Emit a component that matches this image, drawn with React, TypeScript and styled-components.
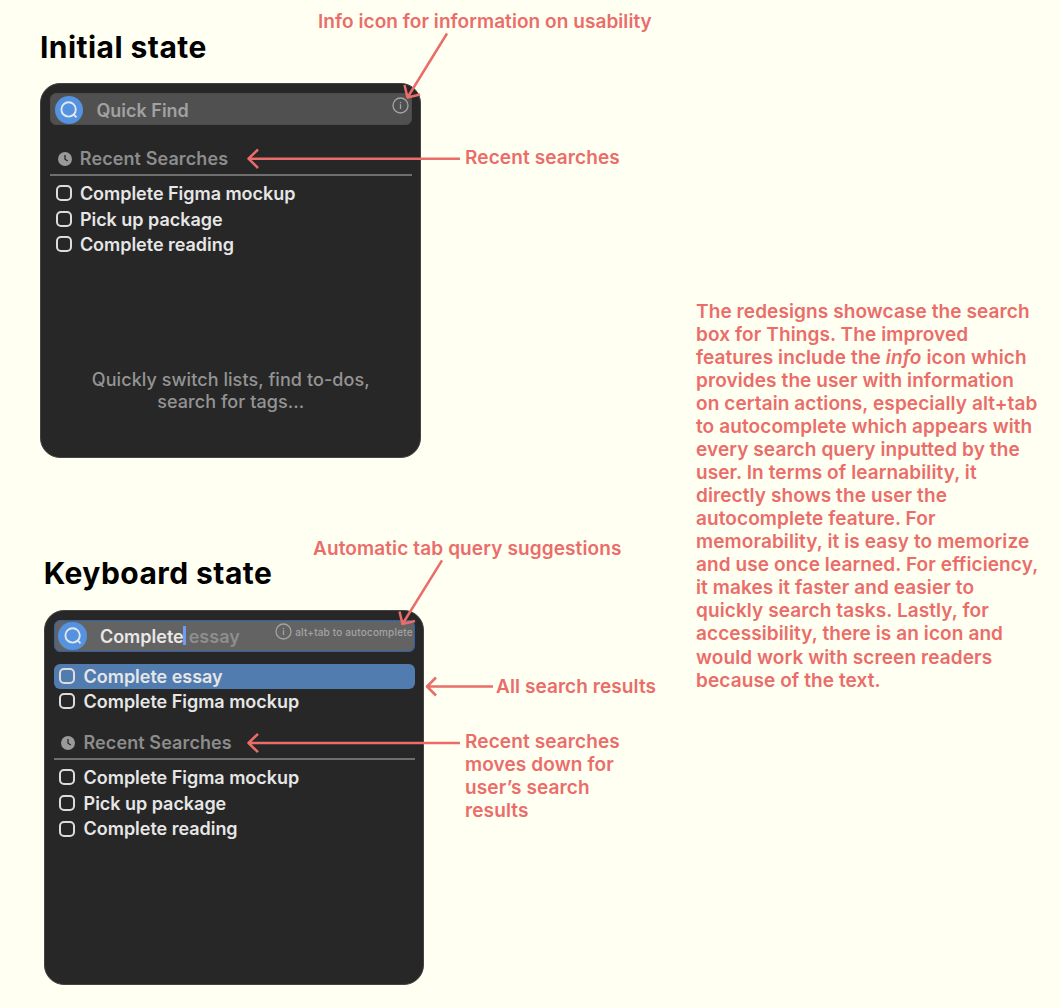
import React from "react";
import styled, { createGlobalStyle } from "styled-components";

const Global = createGlobalStyle`
  * { box-sizing: border-box; }
  body {
    margin: 0;
    background: #fffff2;
    font-family: Inter, "Liberation Sans", sans-serif;
  }
`;

const CORAL = "#ea6d6a";

const Board = styled.main`
  position: relative;
  display: flex;
  justify-content: space-between;
  width: 1060px;
  height: 1008px;
  overflow: hidden;
  background: #fffff2;
`;

const States = styled.div`
  display: flex;
  flex-direction: column;
  padding: 29px 0 0 40px;
`;

const State = styled.section<{ $shift?: boolean }>`
  display: flex;
  flex-direction: column;
  gap: 18px;
  padding-left: ${(p) => (p.$shift ? 3.7 : 0)}px;
  padding-top: ${(p) => (p.$shift ? 98 : 0)}px;
`;

const Title = styled.h1<{ $lift?: boolean }>`
  margin: ${(p) => (p.$lift ? "-1px 0 1px" : "0")};
  font-size: 30px;
  line-height: 36px;
  font-weight: 700;
  letter-spacing: 0.45px;
  color: #000;
  white-space: nowrap;
`;

const Card = styled.div`
  display: flex;
  flex-direction: column;
  width: 380.5px;
  height: 375px;
  padding: 9px 8px 0 9px;
  border: 1px solid #444444;
  border-radius: 20px;
  background: #272727;
`;

const SearchBar = styled.div<{ $active?: boolean }>`
  display: flex;
  align-items: center;
  height: 32px;
  flex: none;
  padding: ${(p) => (p.$active ? "0 0 0 3.8px" : "1.6px 0 0 4px")};
  border: ${(p) => (p.$active ? "1px solid #2c62ad" : "1px solid #4b4b4b")};
  border-radius: 6px;
  background: ${(p) => (p.$active ? "#636363" : "#505050")};
  font-size: 18px;
  line-height: 22px;
  font-weight: 600;
  color: #a1a1a1;
  white-space: pre;
`;

const SearchBadge = styled.span`
  display: flex;
  align-items: center;
  justify-content: center;
  width: 28.4px;
  height: 28.4px;
  margin-right: 13px;
  border-radius: 50%;
  background: #5592e0;
`;

const Query = styled.span`
  padding-top: 2px;
`;

const Typed = styled.span`
  padding-top: 1px;
  color: #e8e8e8;
`;

const Caret = styled.span`
  width: 3px;
  height: 19px;
  margin: -1px 0 0 -1px;
  background: #6c9df5;
`;

const Ghost = styled(Typed)`
  margin-left: 3px;
  color: #8e8e8e;
`;

const Hint = styled.span<{ $active?: boolean }>`
  display: flex;
  align-items: center;
  gap: 3px;
  margin: ${(p) => (p.$active ? "-9px 1.5px 0 auto" : "-9.4px 2px 0 auto")};
  font-size: 10px;
  line-height: 12px;
  font-weight: 500;
  letter-spacing: 0.16px;
  color: #a3a3a3;
`;

const RecentHeader = styled.div<{ $top: number }>`
  display: flex;
  align-items: center;
  flex: none;
  gap: 8.3px;
  height: 30px;
  margin-top: ${(p) => p.$top}px;
  padding: 0 0 0.6px 7.5px;
  border-bottom: 2px solid #6f6f6f;
  font-size: 18px;
  line-height: 22px;
  font-weight: 600;
  letter-spacing: 0.1px;
  color: #8c8c8c;
`;

const List = styled.ul<{ $top: number }>`
  margin: ${(p) => p.$top}px 0 0;
  padding: 0;
  list-style: none;
`;

const Row = styled.li<{ $selected?: boolean }>`
  display: flex;
  align-items: center;
  height: 25.6px;
  gap: 8.3px;
  padding-left: 5.6px;
  border-radius: 6px;
  background: ${(p) => (p.$selected ? "#507cb0" : "transparent")};
  font-size: 18px;
  line-height: 22px;
  font-weight: 600;
  letter-spacing: -0.03px;
  color: #e6e6e6;
  white-space: nowrap;
`;

const Box = styled.span`
  width: 16px;
  height: 16px;
  margin-top: -1.5px;
  border: 2px solid #dcdcdc;
  border-radius: 5px;
`;

const Empty = styled.p`
  margin: 111px 0 0;
  font-size: 18px;
  line-height: 22px;
  font-weight: 500;
  letter-spacing: 0.07px;
  text-align: center;
  color: #949494;
`;

const Rationale = styled.p`
  width: 364px;
  margin: 299.6px 0 0;
  font-size: 19px;
  line-height: 23.06px;
  font-weight: 600;
  letter-spacing: 0.1px;
  color: ${CORAL};
  white-space: nowrap;
`;

const Callout = styled.div<{ $x: number; $y: number; $track?: number }>`
  position: absolute;
  left: ${(p) => p.$x}px;
  top: ${(p) => p.$y}px;
  font-size: 19px;
  line-height: 23px;
  font-weight: 600;
  letter-spacing: ${(p) => p.$track ?? 0.12}px;
  color: ${CORAL};
  white-space: nowrap;
`;

const Arrows = styled.svg`
  position: absolute;
  inset: 0;
  pointer-events: none;
`;

const SearchIcon = () => (
  <svg width="20" height="20" viewBox="0 0 20 20" fill="none" stroke="#e3e8ef" strokeWidth="1.9">
    <circle cx="9.6" cy="9.4" r="7.2" />
    <path d="M14.4 14.2L17.5 17.3" />
  </svg>
);

const InfoIcon = () => (
  <svg width="17" height="17" viewBox="0 0 17 17" fill="none" stroke="#a3a3a3">
    <circle cx="8.5" cy="8.5" r="7.5" strokeWidth="1.3" />
    <path d="M8.5 7.2V12M8.5 5V6.2" strokeWidth="1.3" />
  </svg>
);

const ClockIcon = () => (
  <svg width="14" height="14" viewBox="0 0 14 14" fill="none">
    <circle cx="7" cy="7" r="7" fill="#9a9a9a" />
    <path d="M7 3V7.2L9.8 9" stroke="#272727" strokeWidth="1.3" />
  </svg>
);

const Task = ({ label, selected }: { label: string; selected?: boolean }) => (
  <Row $selected={selected}>
    <Box />
    {label}
  </Row>
);

const Recent = ({ top }: { top: number }) => (
  <>
    <RecentHeader $top={top}>
      <ClockIcon />
      Recent Searches
    </RecentHeader>
    <List $top={5.5}>
      {["Complete Figma mockup", "Pick up package", "Complete reading"].map((t) => (
        <Task key={t} label={t} />
      ))}
    </List>
  </>
);

const paragraph = [
  "The redesigns showcase the search",
  "box for Things. The improved",
  "features include the *info* icon which",
  "provides the user with information",
  "on certain actions, especially alt+tab",
  "to autocomplete which appears with",
  "every search query inputted by the",
  "user. In terms of learnability, it",
  "directly shows the user the",
  "autocomplete feature. For",
  "memorability, it is easy to memorize",
  "and use once learned. For efficiency,",
  "it makes it faster and easier to",
  "quickly search tasks. Lastly, for",
  "accessibility, there is an icon and",
  "would work with screen readers",
  "because of the text.",
];

export default function App() {
  return (
    <Board>
      <Global />
      <States>
        <State>
          <Title>Initial state</Title>
          <Card>
            <SearchBar>
              <SearchBadge><SearchIcon /></SearchBadge>
              <Query>Quick Find</Query>
              <Hint><InfoIcon /></Hint>
            </SearchBar>
            <Recent top={20.7} />
            <Empty>
              Quickly switch lists, find to-dos,
              <br />
              search for tags...
            </Empty>
          </Card>
        </State>
        <State $shift>
          <Title $lift>Keyboard state</Title>
          <Card>
            <SearchBar $active>
              <SearchBadge><SearchIcon /></SearchBadge>
              <Typed>Complete</Typed>
              <Caret />
              <Ghost>essay</Ghost>
              <Hint $active>
                <InfoIcon />
                alt+tab to autocomplete
              </Hint>
            </SearchBar>
            <List $top={11.8}>
              <Task label="Complete essay" selected />
              <Task label="Complete Figma mockup" />
            </List>
            <Recent top={14.8} />
          </Card>
        </State>
      </States>
      <Rationale>
        {paragraph.map((line) => (
          <React.Fragment key={line}>
            {line.split("*").map((part, i) => (i === 1 ? <em key={i}>{part}</em> : part))}
            <br />
          </React.Fragment>
        ))}
      </Rationale>
      <Callout $x={318} $y={10} $track={0.06}>Info icon for information on usability</Callout>
      <Callout $x={465} $y={146}>Recent searches</Callout>
      <Callout $x={313} $y={537}>Automatic tab query suggestions</Callout>
      <Callout $x={496} $y={675} $track={0.08}>All search results</Callout>
      <Callout $x={465} $y={730}>
        Recent searches<br />moves down for<br />user’s search<br />results
      </Callout>
      <Arrows width="1060" height="1008" fill="none" stroke={CORAL} strokeWidth="2.5" strokeLinejoin="round">
        <path d="M447 33.5L407.5 97.5M404.5 85L407.5 97.5L420 94.5" />
        <path d="M460 158.7H248.5M258 149.5L248.5 158.7L258 168" />
        <path d="M442 560.3L402.5 624M399.5 611.5L402.5 624L415 621" />
        <path d="M493 686.5H427M436 677.5L427 686.5L436 695.5" />
        <path d="M460 743H248.5M258 733.8L248.5 743L258 752.2" />
      </Arrows>
    </Board>
  );
}
